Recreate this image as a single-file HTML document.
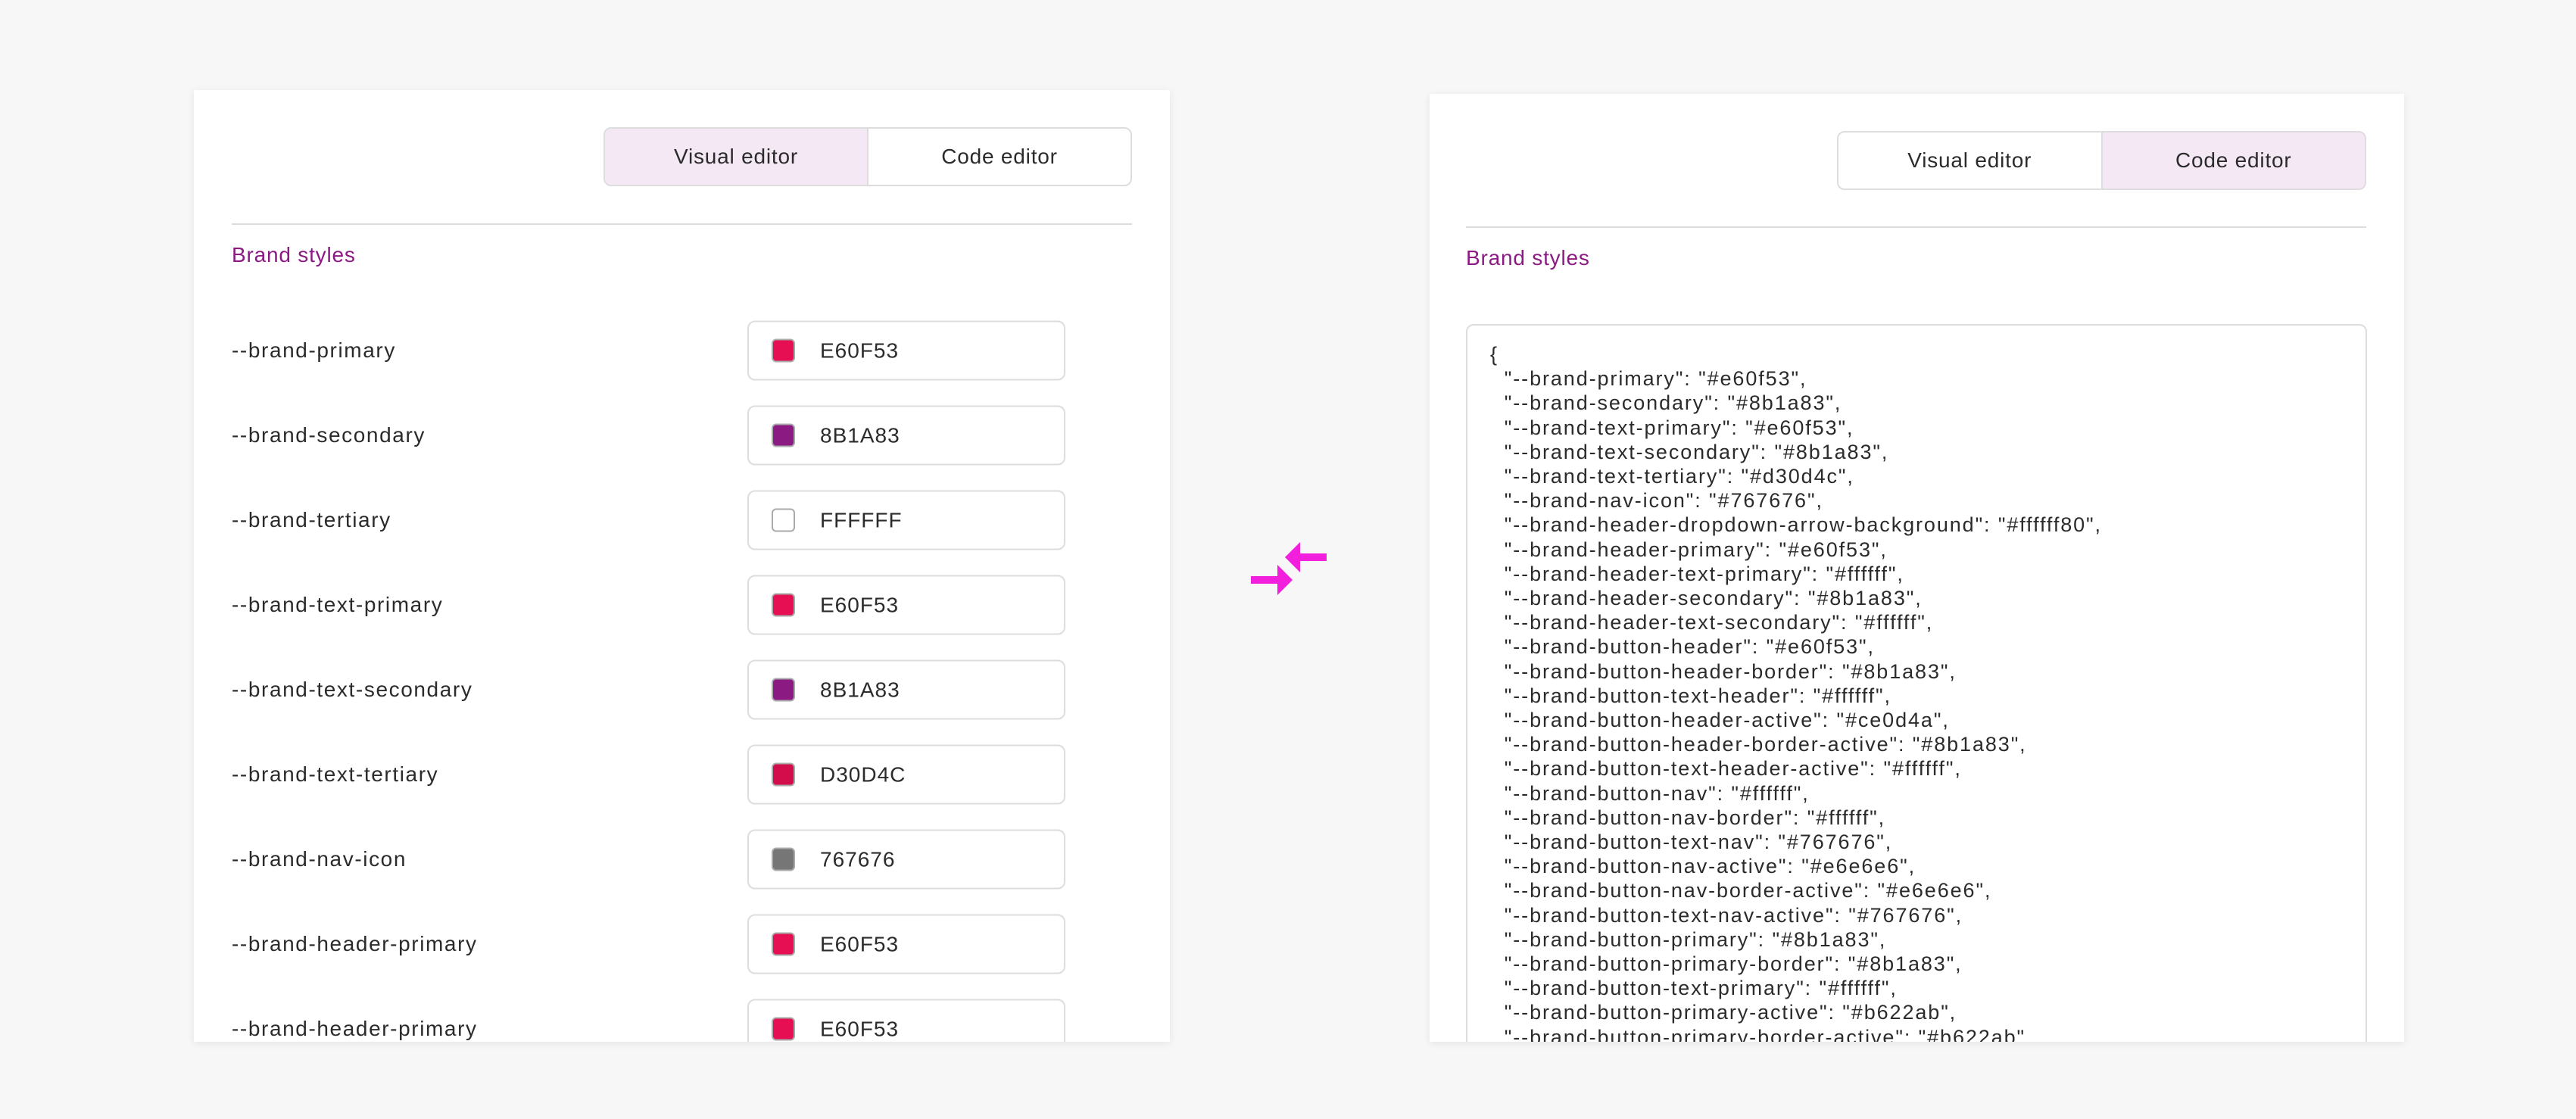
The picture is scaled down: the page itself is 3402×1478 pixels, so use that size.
<!DOCTYPE html>
<html><head><meta charset="utf-8"><style>
*{box-sizing:border-box;margin:0;padding:0}
body{width:3402px;height:1478px;background:#f7f7f7;position:relative;overflow:hidden;font-family:"Liberation Sans",sans-serif;color:#2b2b2b}
.panel{position:absolute;background:#fff;box-shadow:0 2px 10px rgba(0,0,0,0.08);overflow:hidden}
.tog{position:absolute;height:78px;border:2px solid #ddd;border-radius:10px;display:flex;overflow:hidden}
.tog div{flex:1;display:flex;align-items:center;justify-content:center;font-size:28px;color:#2b2b2b;letter-spacing:0.8px}
.tog .on{background:#f3e8f4}
.tog div+div{border-left:2px solid #ddd}
.div{position:absolute;height:2px;background:#ddd}
.bs{position:absolute;font-size:28px;color:#8b1a83;line-height:1;letter-spacing:0.8px}
.lab{position:absolute;left:50px;font-size:28px;line-height:1;transform:translateY(-50%);letter-spacing:1.6px}
.inp{position:absolute;left:731px;width:420px;height:79px;border:2px solid #ddd;border-radius:10px;transform:translateY(-50%)}
.sw{position:absolute;left:30px;top:22px;width:31px;height:31px;border-radius:6px;border:2px solid #aaa}
.val{position:absolute;left:94px;top:50%;transform:translateY(-50%);font-size:28px;letter-spacing:1px}
.code{position:absolute;left:48px;top:304px;width:1190px;height:1000px;border:2px solid #ddd;border-radius:10px;padding:22px 30px;font-size:27px;line-height:32.2px;white-space:pre;color:#2b2b2b;letter-spacing:1.9px}
</style></head><body>
<div class="panel" style="left:256px;top:119px;width:1289px;height:1257px">
  <div class="tog" style="left:541px;top:49px;width:698px"><div class="on">Visual editor</div><div>Code editor</div></div>
  <div class="div" style="left:50px;top:176px;width:1189px"></div>
  <div class="bs" style="left:50px;top:204px">Brand styles</div>
  <div class="lab" style="top:344px">--brand-primary</div><div class="inp" style="top:344px"><div class="sw" style="background:#e60f53"></div><div class="val">E60F53</div></div>
  <div class="lab" style="top:456px">--brand-secondary</div><div class="inp" style="top:456px"><div class="sw" style="background:#8b1a83"></div><div class="val">8B1A83</div></div>
  <div class="lab" style="top:568px">--brand-tertiary</div><div class="inp" style="top:568px"><div class="sw" style="background:#fff"></div><div class="val">FFFFFF</div></div>
  <div class="lab" style="top:680px">--brand-text-primary</div><div class="inp" style="top:680px"><div class="sw" style="background:#e60f53"></div><div class="val">E60F53</div></div>
  <div class="lab" style="top:792px">--brand-text-secondary</div><div class="inp" style="top:792px"><div class="sw" style="background:#8b1a83"></div><div class="val">8B1A83</div></div>
  <div class="lab" style="top:904px">--brand-text-tertiary</div><div class="inp" style="top:904px"><div class="sw" style="background:#d30d4c"></div><div class="val">D30D4C</div></div>
  <div class="lab" style="top:1016px">--brand-nav-icon</div><div class="inp" style="top:1016px"><div class="sw" style="background:#767676"></div><div class="val">767676</div></div>
  <div class="lab" style="top:1128px">--brand-header-primary</div><div class="inp" style="top:1128px"><div class="sw" style="background:#e60f53"></div><div class="val">E60F53</div></div>
  <div class="lab" style="top:1240px">--brand-header-primary</div><div class="inp" style="top:1240px"><div class="sw" style="background:#e60f53"></div><div class="val">E60F53</div></div>
</div>
<svg style="position:absolute;left:1640px;top:710px" width="120" height="90" viewBox="1640 710 120 90">
  <path fill="#f21fdd" d="M1697 736 L1717 716 L1717 731 L1752 731 L1752 741 L1717 741 L1717 756 Z"/>
  <path fill="#f21fdd" d="M1707 766 L1687 746 L1687 761 L1652 761 L1652 771 L1687 771 L1687 786 Z"/>
</svg>
<div class="panel" style="left:1888px;top:124px;width:1287px;height:1252px">
  <div class="tog" style="left:538px;top:49px;width:699px"><div>Visual editor</div><div class="on">Code editor</div></div>
  <div class="div" style="left:48px;top:175px;width:1189px"></div>
  <div class="bs" style="left:48px;top:203px">Brand styles</div>
  <div class="code">{
  "--brand-primary": "#e60f53",
  "--brand-secondary": "#8b1a83",
  "--brand-text-primary": "#e60f53",
  "--brand-text-secondary": "#8b1a83",
  "--brand-text-tertiary": "#d30d4c",
  "--brand-nav-icon": "#767676",
  "--brand-header-dropdown-arrow-background": "#ffffff80",
  "--brand-header-primary": "#e60f53",
  "--brand-header-text-primary": "#ffffff",
  "--brand-header-secondary": "#8b1a83",
  "--brand-header-text-secondary": "#ffffff",
  "--brand-button-header": "#e60f53",
  "--brand-button-header-border": "#8b1a83",
  "--brand-button-text-header": "#ffffff",
  "--brand-button-header-active": "#ce0d4a",
  "--brand-button-header-border-active": "#8b1a83",
  "--brand-button-text-header-active": "#ffffff",
  "--brand-button-nav": "#ffffff",
  "--brand-button-nav-border": "#ffffff",
  "--brand-button-text-nav": "#767676",
  "--brand-button-nav-active": "#e6e6e6",
  "--brand-button-nav-border-active": "#e6e6e6",
  "--brand-button-text-nav-active": "#767676",
  "--brand-button-primary": "#8b1a83",
  "--brand-button-primary-border": "#8b1a83",
  "--brand-button-text-primary": "#ffffff",
  "--brand-button-primary-active": "#b622ab",
  "--brand-button-primary-border-active": "#b622ab",
  "--brand-button-text-primary-active": "#ffffff"
}</div>
</div>
</body></html>
